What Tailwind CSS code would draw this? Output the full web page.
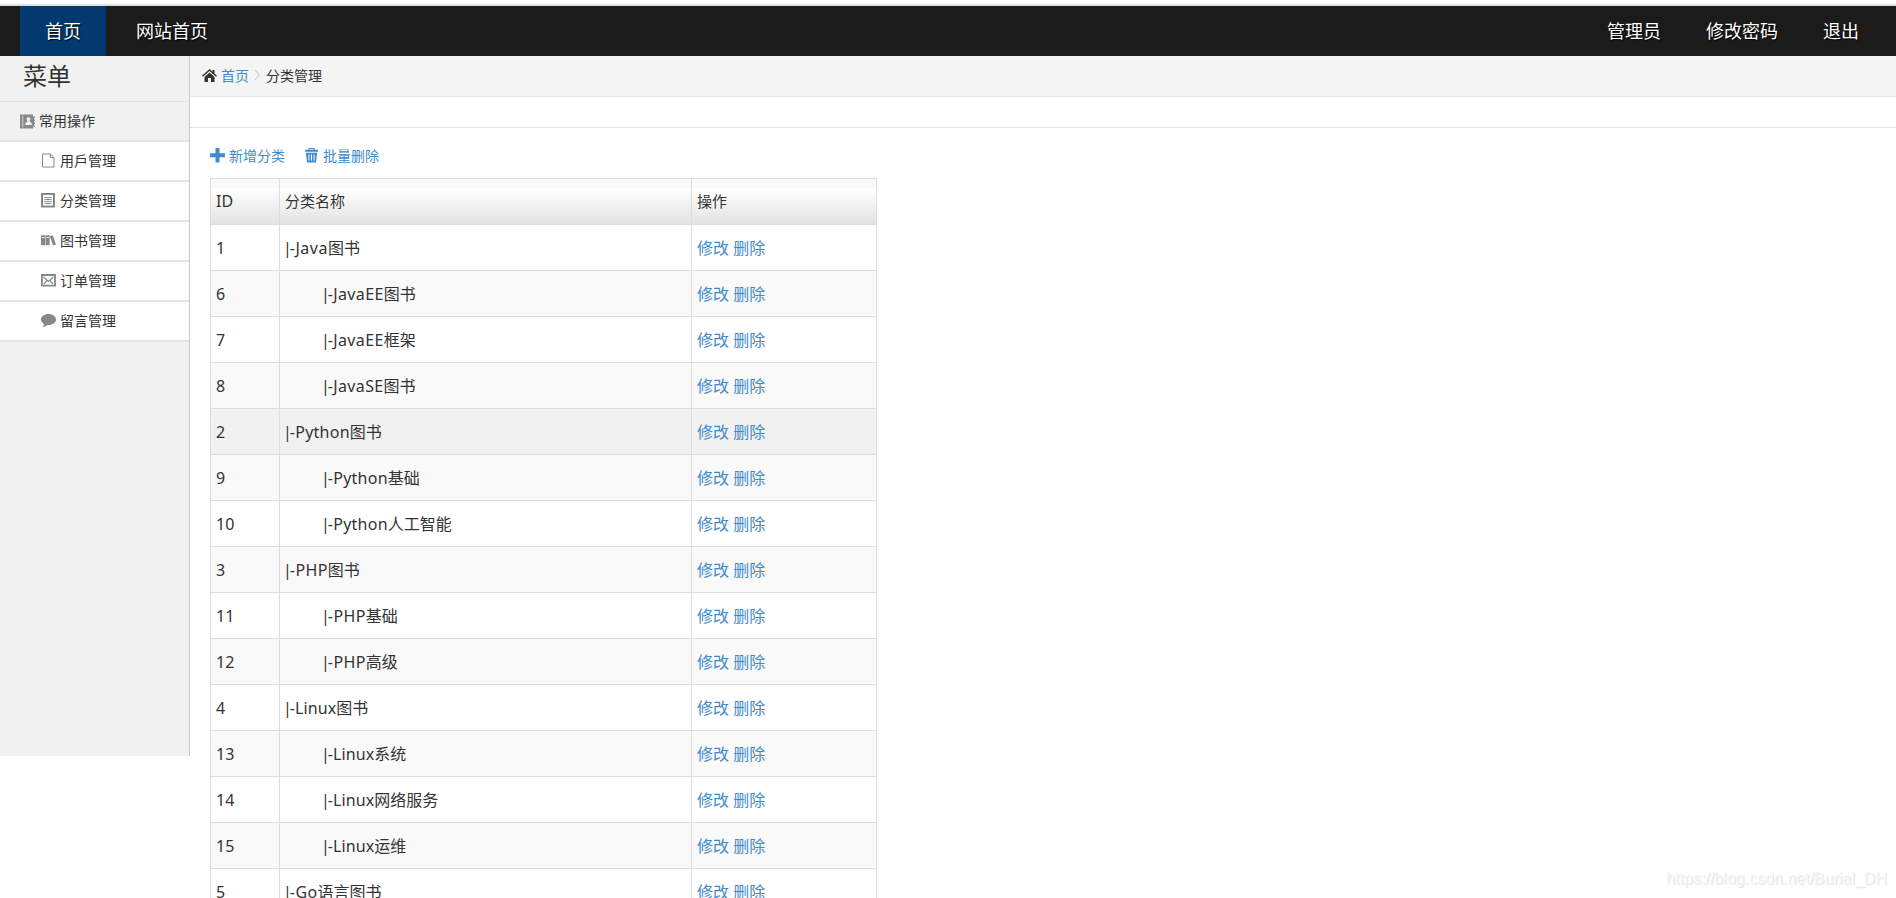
<!DOCTYPE html>
<html lang="zh-CN">
<head>
<meta charset="utf-8">
<title>分类管理</title>
<script src="https://cdn.jsdelivr.net/npm/@tailwindcss/browser@4"></script>
</head>
<body class="h-[898px] overflow-hidden bg-white font-['Noto_Sans','Noto_Sans_CJK_SC',sans-serif] text-[14px] text-[#333]">
<header class="mt-1 flex h-[52px] items-stretch border-t-2 border-[#dde0df] bg-[#1b1b1b] pl-5 text-[18px] leading-[50px] text-white [text-shadow:1px_1px_1px_#000]">
  <a class="w-[86px] bg-[#023a70] text-center">首页</a>
  <a class="ml-[30px]">网站首页</a>
  <nav class="ml-auto flex gap-[45px] pr-[37px]"><a>管理员</a><a>修改密码</a><a>退出</a></nav>
</header>
<div class="flex items-start">
  <aside class="h-[700px] w-[190px] shrink-0 border-r border-[#c9c9c9] bg-[#f1f1f1]">
    <h1 class="h-[46px] border-b border-[#e3e3e3] pl-[23px] text-[24px] leading-[40px]">菜单</h1>
    <div class="flex h-10 items-center gap-1 border-b-2 border-[#e4e4e4] pl-5">
      <svg class="size-[15px] fill-[#888]" viewBox="0 0 15 15"><path fill-rule="evenodd" d="M0 .5h13v2h2v1.500h-1v1.500h1v1.500h-1v1.500h1v1.500h-1v1.500h1v1h-2v2H0zM2.500 1.500v12h.7v-12zM8.500 3.300a1.900 1.900 0 0 0-1.200 3.400v1L5.300 9v2h6.400V9L9.700 7.700v-1A1.900 1.900 0 0 0 8.500 3.300z"/></svg>
      <span class="pb-0.5">常用操作</span>
    </div>
    <ul class="[&>li]:flex [&>li]:h-10 [&>li]:items-center [&>li]:gap-1 [&>li]:border-b-2 [&>li]:border-[#e4e4e4] [&>li]:bg-white [&>li]:pb-0.5 [&>li]:pl-[41px]">
      <li><svg class="size-[15px]" viewBox="0 0 15 15" fill="none" stroke="#888"><path d="M1.500 1h7.800L13 4.700V14H1.500zM9.300 1v3.700H13"/></svg><span>用戶管理</span></li>
      <li><svg class="size-[15px]" viewBox="0 0 15 15" fill="none" stroke="#888"><path stroke-width="2" d="M1 1h12v12.500H1z"/><path d="M3.500 4.500h7M3.500 6.500h7M3.500 8.500h7M3.500 10.500h7"/></svg><span>分类管理</span></li>
      <li><svg class="size-[15px] fill-[#888]" viewBox="0 0 15 15"><path fill-rule="evenodd" d="M0 2.300h4.200v10H0zM1 4v1h2.200V4zM4.700 2.300h4v10h-4zM5.600 4v1h2.200V4zM8.800 3.300l3-1L15 11.500l-3 1z"/></svg><span>图书管理</span></li>
      <li><svg class="size-[15px]" viewBox="0 0 15 15" fill="none" stroke="#888"><path stroke-width="1.800" d="M.9 2h13.200v10.700H.9z"/><path stroke-width="1.200" d="M2.500 4l5 4.400 5-4.400M2.800 11.200l3.300-3.600M12.200 11.200L8.900 7.600"/></svg><span>订单管理</span></li>
      <li><svg class="size-[15px] fill-[#888]" viewBox="0 0 15 15"><path d="M7.500 1C3.400 1 0 3.400 0 6.500c0 1.900 1.300 3.500 3.100 4.500-.1 1.200-.8 2-1.600 2.700 2 .2 3.600-.6 4.700-1.800l1.300.1C11.600 12 15 9.600 15 6.500S11.600 1 7.500 1z"/></svg><span>留言管理</span></li>
    </ul>
  </aside>
  <main class="min-w-0 flex-1">
    <div class="flex h-[41px] items-center border-b border-[#e3e3e3] bg-[#f4f4f4] pb-0.5 pl-3">
      <svg class="size-[15px] fill-[#333]" viewBox="0 0 15 15"><path d="M7.500 1L0 7.700l1 1 6.500-5.800L14 8.700l1-1-2.500-2.300V2h-2v1.700zM2.500 9l5-4.400 5 4.400v5H9v-4H6v4H2.500z"/></svg>
      <a class="ml-1 text-[#428bca]">首页</a>
      <svg class="mx-[5px] h-3 w-[7px]" viewBox="0 0 7 12" fill="none" stroke="#b9c6d8"><path d="M1 1l4.500 5L1 11"/></svg>
      <span>分类管理</span>
    </div>
    <div class="h-[31px] border-b border-[#e3e3e3]"></div>
    <div class="flex h-[50px] items-center pt-[5px] pl-5 text-[#428bca]">
      <svg class="size-[15px] fill-[#428bca]" viewBox="0 0 15 15"><path d="M5.500 0h4v5.300H15v4H9.500V14.500h-4V9.300H0v-4h5.500z"/></svg>
      <a class="ml-1">新增分类</a>
      <svg class="ml-[19px] size-[15px] fill-[#428bca]" viewBox="0 0 15 15"><path fill-rule="evenodd" d="M4.500 0h6v1.800H14v2H1v-2h3.500zM5.600 1v.8h3.800V1zM1.800 4.700h11.400L12 14.500H3zM4.400 6.500v6h1v-6zM7 6.500v6h1v-6zM9.600 6.500v6h1v-6z"/></svg>
      <a class="ml-1">批量删除</a>
    </div>
    <table class="ml-5 w-[667px] table-fixed border-collapse text-[16px] leading-6 [&_td]:border [&_td]:border-[#ddd] [&_td]:px-[5px] [&_td]:py-0 [&_th]:border [&_th]:border-[#ddd] [&_th]:px-[5px] [&_th]:pb-0.5">
      <colgroup><col class="w-[69px]"><col class="w-[412px]"><col class="w-[185px]"></colgroup>
      <thead><tr class="h-[46px] bg-[linear-gradient(#f9f9f9_0,#f9f9f9_9px,#fff_9px,#e2e2e2_46px)] text-left text-[15px] [&>th]:font-normal"><th class="text-[16px]">ID</th><th>分类名称</th><th>操作</th></tr></thead>
      <tbody id="rows"></tbody>
    </table>
  </main>
</div>
<div class="fixed right-[9px] bottom-[7px] font-['Liberation_Sans',sans-serif] text-[16px] leading-6 text-[#f6f6f6] [text-shadow:1px_1px_1px_#e2e2e2]">https://blog.csdn.net/Burial_DH</div>
<script>
const rows = [[1,'Java','图书',0],[6,'JavaEE','图书',1],[7,'JavaEE','框架',1],[8,'JavaSE','图书',1],[2,'Python','图书',0],[9,'Python','基础',1],[10,'Python','人工智能',1],[3,'PHP','图书',0],[11,'PHP','基础',1],[12,'PHP','高级',1],[4,'Linux','图书',0],[13,'Linux','系统',1],[14,'Linux','网络服务',1],[15,'Linux','运维',1],[5,'Go','语言图书',0]];
const tracking = {Java: 0.5, JavaEE: 0.35, JavaSE: 0.35, Python: 0.25, PHP: 0.4, Linux: 0.1, Go: 0.4};
document.getElementById('rows').innerHTML = rows.map(([id, en, zh, sub], i) =>
  `<tr class="h-[46px] ${i === 4 ? 'bg-[#f1f1f1]' : i % 2 ? 'bg-[#f9f9f9]' : 'bg-white'}"><td>${id}</td><td class="whitespace-nowrap"><span class="${sub ? 'ml-[38px]' : ''}"><span class="-mr-0.5 -ml-0.5">|</span><span style="letter-spacing:${tracking[en]}px">-${en}</span>${zh}</span></td><td class="text-[#428bca]"><a>修改</a> <a>删除</a></td></tr>`).join('');
</script>
</body>
</html>
